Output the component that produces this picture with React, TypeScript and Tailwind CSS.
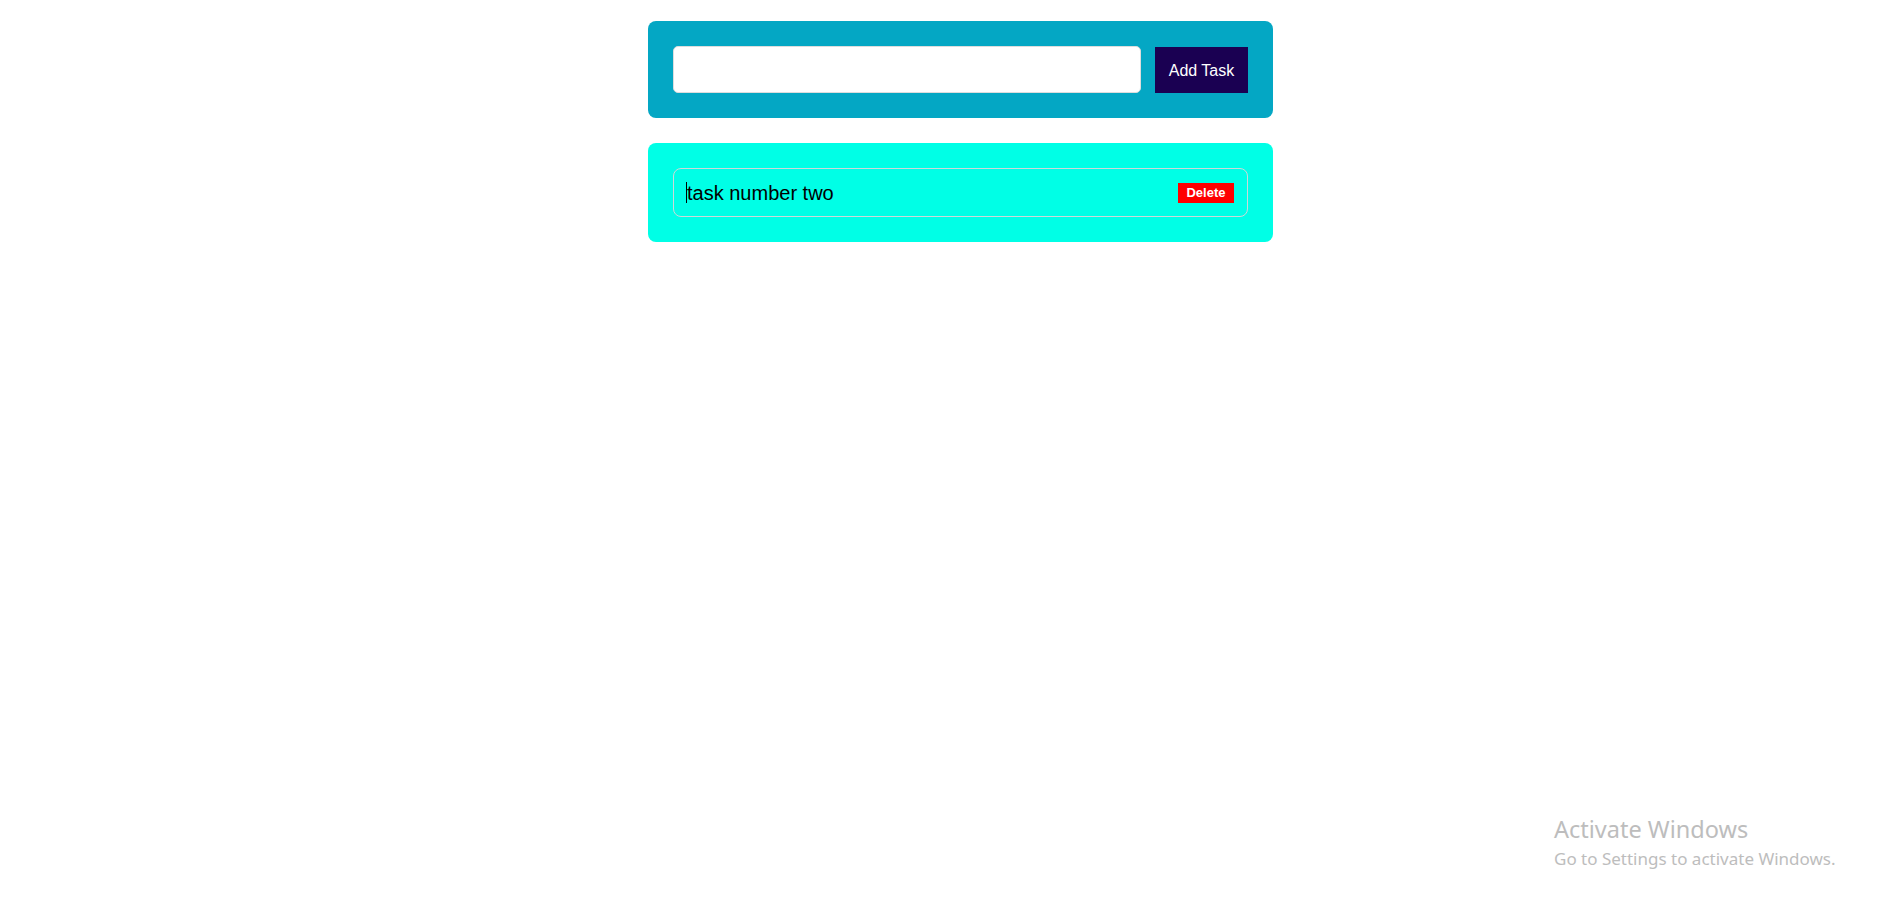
import { useState } from 'react';

export default function App() {
  const [text, setText] = useState('');
  const [tasks, setTasks] = useState<string[]>(['task number two']);

  const addTask = () => {
    if (!text.trim()) return;
    setTasks([...tasks, text.trim()]);
    setText('');
  };

  return (
    <main className="relative min-h-screen bg-white font-['Liberation_Sans',Arial,sans-serif]">
      <div className="flex flex-col gap-[25px] pl-[648px] pt-[21px]">
        {/* input panel */}
        <div className="flex w-[625px] items-center gap-[14px] rounded-[8px] bg-[#04a7c4] p-[25px]">
          <input
            value={text}
            onChange={(e) => setText(e.target.value)}
            className="h-[47px] flex-1 rounded-[5px] border border-[#dddddd] bg-white px-3 text-[16px] outline-none"
          />
          <button
            onClick={addTask}
            className="mt-[1px] h-[46px] w-[93px] bg-[#1a0052] pt-[2px] text-[16px] text-white"
          >
            Add Task
          </button>
        </div>

        {/* task list */}
        <div className="flex w-[625px] flex-col gap-3 rounded-[8px] bg-[#00ffe6] p-[25px]">
          {tasks.map((t, i) => (
            <div
              key={i}
              className="flex h-[49px] items-center justify-between rounded-[8px] border border-[#cfd8d8] pl-[12px] pr-[13px]"
            >
              <span className="flex items-center text-[20px] leading-none text-black">
                <span className="inline-block h-[21px] w-px bg-black" />
                {t}
              </span>
              <button
                onClick={() => setTasks(tasks.filter((_, j) => j !== i))}
                className="h-[20px] w-[56px] bg-[#ff0000] text-[13px] font-bold leading-none text-white"
              >
                Delete
              </button>
            </div>
          ))}
        </div>
      </div>

      {/* windows watermark */}
      <div className="pointer-events-none absolute left-[1554px] top-[813px] font-['Noto_Sans',sans-serif] text-[#bdbdbd]">
        <div className="text-[23.5px] leading-[32px]">Activate Windows</div>
        <div className="mt-[2px] text-[17px] leading-[24px]">Go to Settings to activate Windows.</div>
      </div>
    </main>
  );
}
